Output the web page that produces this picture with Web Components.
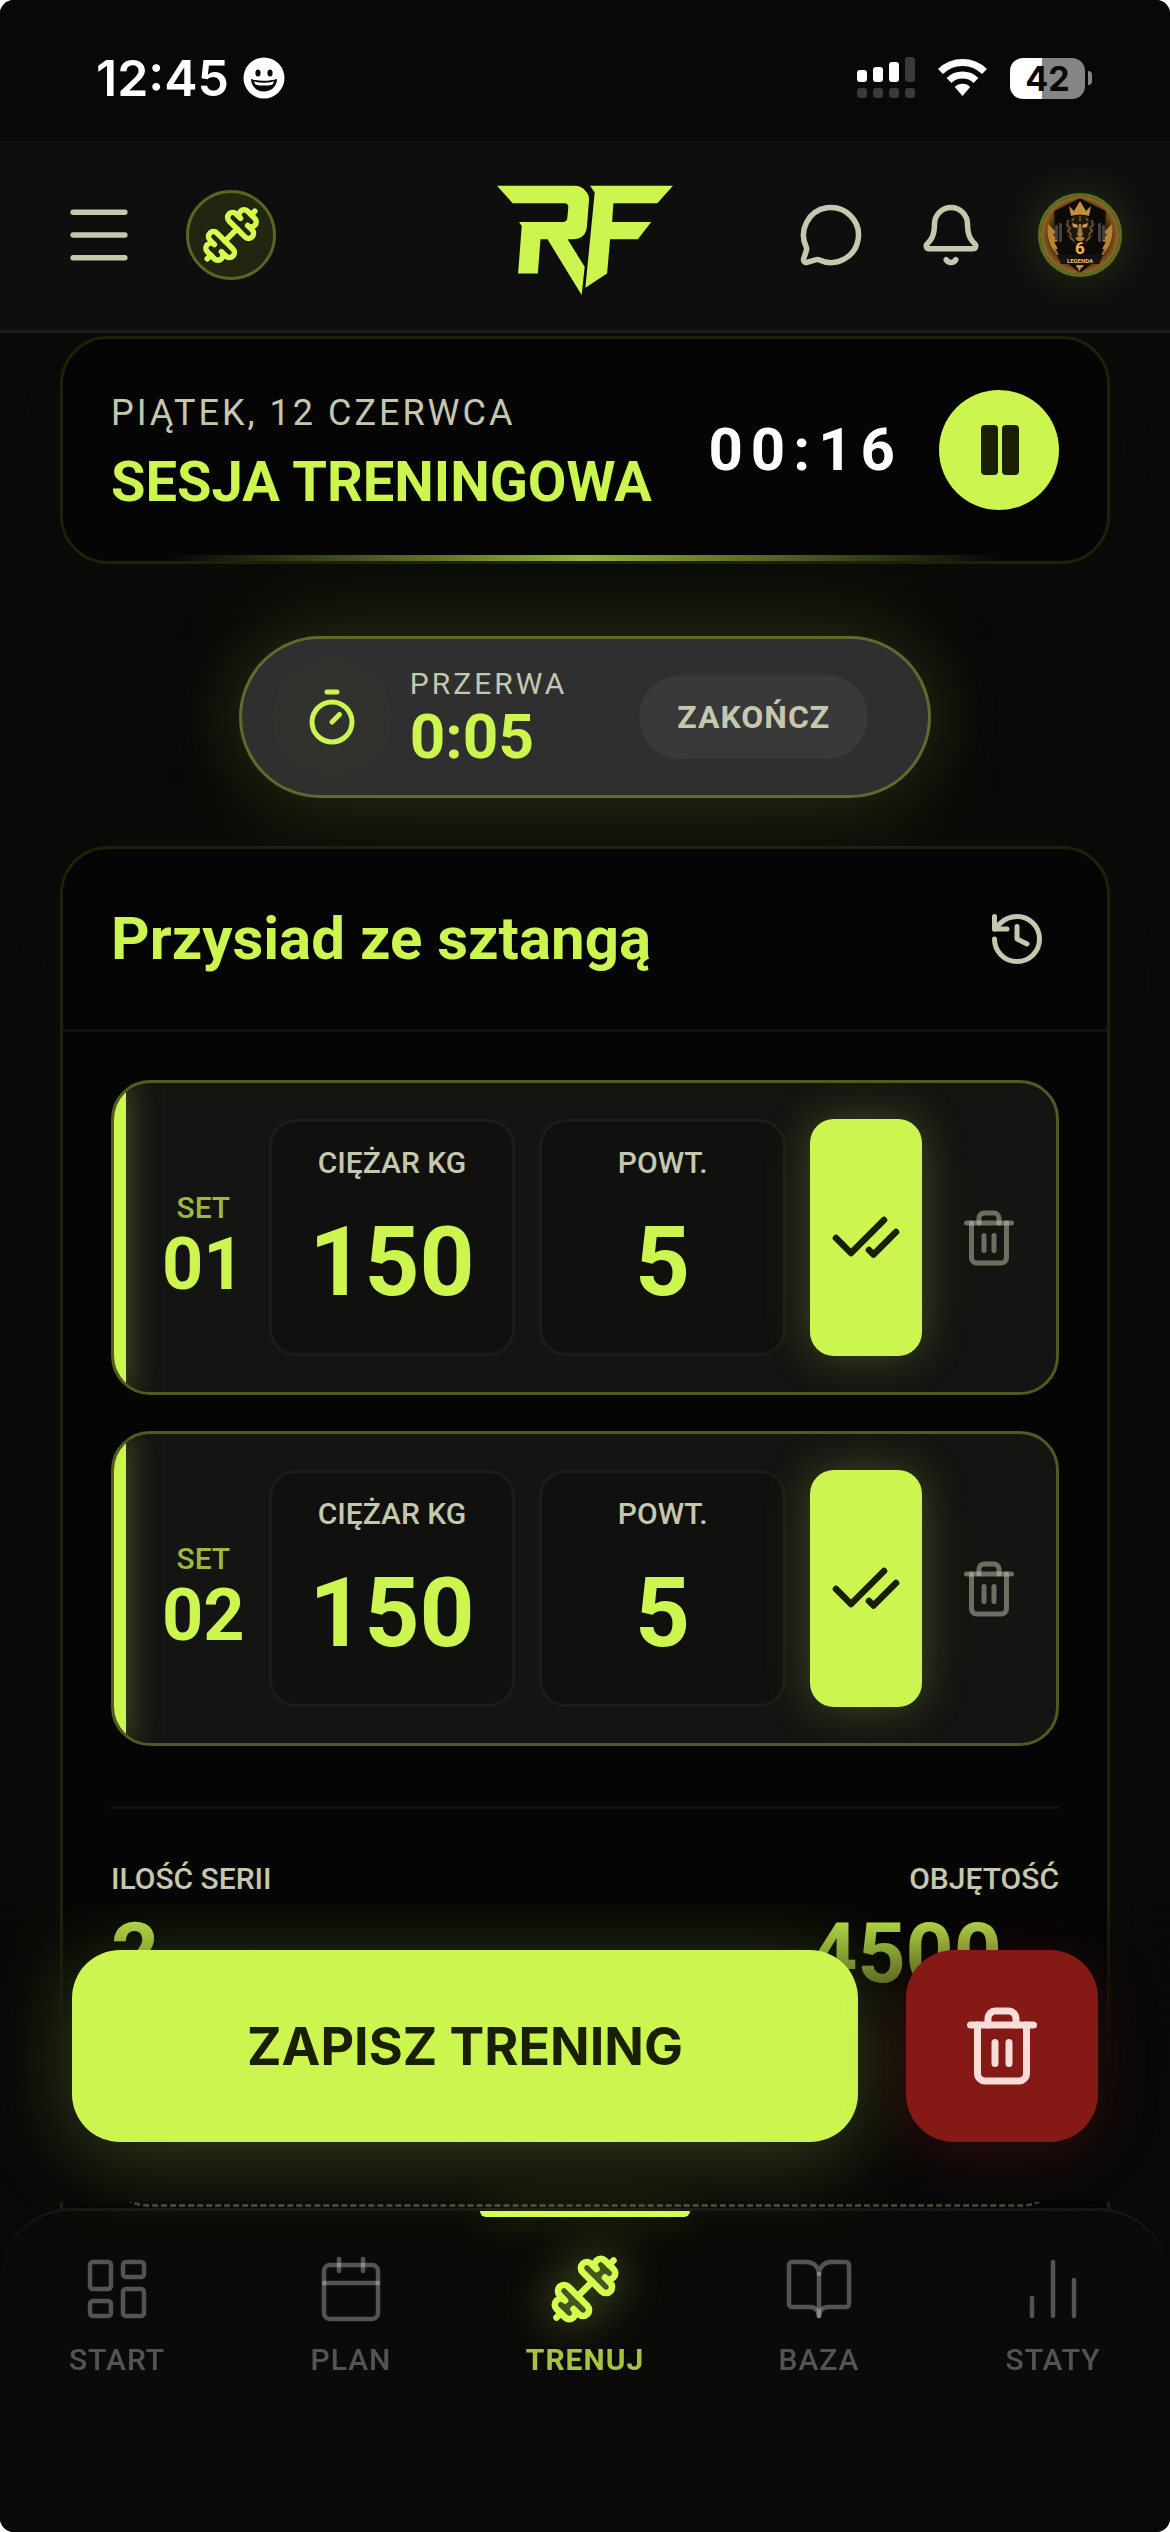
<!DOCTYPE html>
<html lang="pl">
<head>
<meta charset="utf-8">
<meta name="viewport" content="width=device-width, initial-scale=1">
<title>RF - Sesja treningowa</title>
<style>
    :root {
        --lime: #ccf550;
        --ink: #1a1f03;
        --muted: #c5c8ae;
        --card: #050505;
        --card-line: #1d2206;
        --hairline: #121212;
    }
    html {
        background: #fff;
    }
    body {
        margin: 0;
        font-family: Roboto, "Noto Sans", sans-serif;
        color: var(--muted);
    }
</style>
</head>
<body>
<app-shell>
    <status-bar slot="top" time="12:45" battery="42"></status-bar>
    <app-header slot="top"></app-header>
    <session-card date="PIĄTEK, 12 CZERWCA" clock="00:16">SESJA TRENINGOWA</session-card>
    <rest-timer left="0:05">PRZERWA</rest-timer>
    <exercise-card name="Przysiad ze sztangą" sets="2" volume="4500">
        <set-row number="01" weight="150" reps="5"></set-row>
        <set-row number="02" weight="150" reps="5"></set-row>
    </exercise-card>
    <action-bar slot="dock">ZAPISZ TRENING</action-bar>
    <tab-bar slot="dock">
        <tab-item icon="dashboard" href="#start">START</tab-item>
        <tab-item icon="calendar" href="#plan">PLAN</tab-item>
        <tab-item icon="dumbbell" href="#trenuj" active>TRENUJ</tab-item>
        <tab-item icon="book" href="#baza">BAZA</tab-item>
        <tab-item icon="stats" href="#staty">STATY</tab-item>
    </tab-bar>
</app-shell>

<script>
const ICONS = {
    menu: '<path d="M2.6 3.7h18.8M2.6 12h18.8M2.6 20.3h18.8"/>',
    dumbbell: '<path class="body" d="M17.596 12.768a2 2 0 1 0 2.829-2.829l-1.768-1.767a2 2 0 0 0 2.828-2.829l-2.828-2.828a2 2 0 0 0-2.829 2.828l-1.767-1.768a2 2 0 1 0-2.829 2.829z"/><path d="m2.5 21.5 1.4-1.4"/><path d="m20.1 3.9 1.4-1.4"/><path class="body" d="M5.343 21.485a2 2 0 1 0 2.829-2.828l1.767 1.768a2 2 0 1 0 2.829-2.829l-6.364-6.364a2 2 0 1 0-2.829 2.829l1.768 1.767a2 2 0 0 0-2.828 2.829z"/><path d="m9.6 14.4 4.8-4.8"/>',
    chat: '<path d="M2.992 16.342a2 2 0 0 1 .094 1.167l-1.065 3.29a1 1 0 0 0 1.236 1.168l3.413-.998a2 2 0 0 1 1.099.092 10 10 0 1 0-4.777-4.719"/>',
    bell: '<path d="M10.268 21a2 2 0 0 0 3.464 0"/><path d="M3.262 15.326A1 1 0 0 0 4 17h16a1 1 0 0 0 .74-1.673C19.41 13.956 18 12.499 18 8A6 6 0 0 0 6 8c0 4.499-1.411 5.956-2.738 7.326"/>',
    pause: '<rect x="4.8" y="2" width="6.8" height="20" rx="1.6" fill="currentColor" stroke="none"/><rect x="13.2" y="2" width="6.8" height="20" rx="1.6" fill="currentColor" stroke="none"/>',
    timer: '<path d="M10 2h4"/><path d="m12 14 3-3"/><circle cx="12" cy="14" r="8"/>',
    history: '<path d="M3 12a9 9 0 1 0 9-9 9.75 9.75 0 0 0-6.74 2.74L3 8"/><path d="M3 3v5h5"/><path d="M12 7v5l4 2"/>',
    checks: '<path d="M18 6 7 17l-5-5"/><path d="m22 10-7.5 7.5L13 16"/>',
    trash: '<path d="M3 6h18"/><path d="M19 6v14c0 1-1 2-2 2H7c-1 0-2-1-2-2V6"/><path d="M8 6V4c0-1 1-2 2-2h4c1 0 2 1 2 2v2"/><path d="M10 11v6"/><path d="M14 11v6"/>',
    plus: '<path d="M5 12h14"/><path d="M12 5v14"/>',
    dashboard: '<rect width="7" height="9" x="3" y="3" rx="1"/><rect width="7" height="5" x="14" y="3" rx="1"/><rect width="7" height="9" x="14" y="12" rx="1"/><rect width="7" height="5" x="3" y="16" rx="1"/>',
    calendar: '<path d="M8 2v4"/><path d="M16 2v4"/><rect width="18" height="18" x="3" y="4" rx="2"/><path d="M3 10h18"/>',
    book: '<path d="M12 7v14"/><path d="M3 18a1 1 0 0 1-1-1V4a1 1 0 0 1 1-1h5a4 4 0 0 1 4 4 4 4 0 0 1 4-4h5a1 1 0 0 1 1 1v13a1 1 0 0 1-1 1h-6a3 3 0 0 0-3 3 3 3 0 0 0-3-3z"/>',
    stats: '<path d="M5 21v-6"/><path d="M12 21V3"/><path d="M19 21V9"/>'
};

class UiIcon extends HTMLElement {
    constructor() {
        super();
        this.attachShadow({ mode: 'open' });
    }
    connectedCallback() {
        const size = this.getAttribute('size') || 60;
        this.shadowRoot.innerHTML = `
            <style>
                :host { display: block; line-height: 0; }
                svg {
                    fill: none;
                    stroke: currentColor;
                    stroke-linecap: round;
                    stroke-linejoin: round;
                }
                .body { fill: var(--icon-fill, none); }
            </style>
            <svg viewBox="0 0 24 24" width="${size}" height="${size}" stroke-width="${this.getAttribute('stroke') || 2}" aria-hidden="true">${ICONS[this.getAttribute('name')]}</svg>
        `;
    }
}
customElements.define('ui-icon', UiIcon);

class AppShell extends HTMLElement {
    constructor() {
        super();
        this.attachShadow({ mode: 'open' });
    }
    connectedCallback() {
        this.shadowRoot.innerHTML = `
            <style>
                :host {
                    display: block;
                    height: 100vh;
                    overflow: hidden;
                    border-radius: 14px;
                    background: #080808;
                }
                .top {
                    position: relative;
                    z-index: 2;
                }
                main {
                    display: flex;
                    flex-direction: column;
                    padding: 3px 60px 0;
                }
                .dock {
                    position: fixed;
                    inset: auto 0 0 0;
                    z-index: 3;
                    border-radius: 0 0 14px 14px;
                    overflow: hidden;
                }
            </style>
            <div class="top"><slot name="top"></slot></div>
            <main><slot></slot></main>
            <div class="dock"><slot name="dock"></slot></div>
        `;
    }
}
customElements.define('app-shell', AppShell);

class StatusBar extends HTMLElement {
    constructor() {
        super();
        this.attachShadow({ mode: 'open' });
    }
    connectedCallback() {
        this.shadowRoot.innerHTML = `
            <style>
                :host {
                    display: flex;
                    justify-content: space-between;
                    align-items: center;
                    padding: 48px 78px 33px 96px;
                    background: #080808;
                    color: #fff;
                    font-family: Inter, sans-serif;
                }
                .clock, .signals {
                    display: flex;
                    align-items: center;
                }
                .clock {
                    gap: 14px;
                    font-size: 50px;
                    font-weight: 600;
                    line-height: 60px;
                }
                .signals { gap: 22px; }
                .battery {
                    display: flex;
                    align-items: center;
                    gap: 3px;
                }
                .level {
                    width: 75px;
                    border-radius: 13px;
                    background: linear-gradient(90deg, #fff 43%, #858585 43%);
                    color: #080808;
                    font-size: 34px;
                    font-weight: 700;
                    line-height: 41px;
                    text-align: center;
                }
                .tip {
                    width: 4px;
                    height: 14px;
                    border-radius: 0 7px 7px 0;
                    background: #858585;
                }
                svg { display: block; }
            </style>
            <div class="clock">
                <span>${this.getAttribute('time')}</span>
                <svg width="42" height="42" viewBox="0 0 42 42" aria-hidden="true">
                    <circle cx="21" cy="21" r="20.5" fill="#fff"/>
                    <ellipse cx="15" cy="16" rx="2.6" ry="3.6" fill="#080808"/>
                    <ellipse cx="27" cy="16" rx="2.6" ry="3.6" fill="#080808"/>
                    <path d="M8 22c8 2.400 18 2.400 26 0 0 7-5.500 12.500-13 12.500S8 29 8 22z" fill="#080808"/>
                    <path d="M11 24.500c6.500 1.800 13.500 1.800 20 0-.5 1.500-1 2.500-2 3.200-5 1.200-11 1.200-16 0-1-.7-1.700-1.700-2-3.200z" fill="#fff"/>
                </svg>
            </div>
            <div class="signals">
                <svg width="58" height="42" viewBox="0 0 58 42" aria-hidden="true">
                    <g fill="#fff">
                        <rect x="0" y="13" width="10" height="12" rx="3"/>
                        <rect x="16" y="10" width="10" height="15" rx="3"/>
                        <rect x="32" y="5" width="10" height="20" rx="3"/>
                    </g>
                    <g fill="#3a3a3a">
                        <rect x="48" y="0" width="10" height="25" rx="3"/>
                        <rect x="0" y="31" width="10" height="10" rx="3"/>
                        <rect x="16" y="31" width="10" height="10" rx="3"/>
                        <rect x="32" y="31" width="10" height="10" rx="3"/>
                        <rect x="48" y="31" width="10" height="10" rx="3"/>
                    </g>
                </svg>
                <svg width="51" height="38" viewBox="0 0 51 38" aria-hidden="true">
                    <path d="M3.500 12.500a31.500 31.500 0 0 1 44 0" fill="none" stroke="#fff" stroke-width="7"/>
                    <path d="M12 21.500a19.500 19.500 0 0 1 27 0" fill="none" stroke="#fff" stroke-width="7"/>
                    <path d="M17.800 28a11 11 0 0 1 15.400 0L25.500 37z" fill="#fff"/>
                </svg>
                <div class="battery"><div class="level">${this.getAttribute('battery')}</div><div class="tip"></div></div>
            </div>
        `;
    }
}
customElements.define('status-bar', StatusBar);

class AppHeader extends HTMLElement {
    constructor() {
        super();
        this.attachShadow({ mode: 'open' });
    }
    connectedCallback() {
        this.shadowRoot.innerHTML = `
            <style>
                :host {
                    display: grid;
                    grid-template-columns: 1fr auto 1fr;
                    align-items: center;
                    padding: 34px 48px 35px;
                    background: #0e0e0e;
                    border-bottom: 3px solid #1b1b1b;
                }
                .group {
                    display: flex;
                    align-items: center;
                    gap: 24px;
                }
                .left { gap: 36px; }
                .right { justify-content: flex-end; }
                button {
                    display: grid;
                    place-items: center;
                    width: 96px;
                    height: 96px;
                    padding: 0;
                    border: 0;
                    background: none;
                    color: var(--muted);
                }
                .left button:first-child { width: 102px; }
                button.round {
                    width: 90px;
                    height: 90px;
                    border: 3px solid #59661f;
                    border-radius: 50%;
                    background: #222510;
                    color: #d4ff4f;
                }
                button.avatar {
                    width: 84px;
                    height: 84px;
                    margin-left: 15px;
                    border: 3px solid #5a6f20;
                    border-radius: 50%;
                    box-shadow: 0 0 45px rgba(204, 245, 80, 0.16);
                    overflow: hidden;
                }
                svg { display: block; }
            </style>
            <div class="group left">
                <button type="button" aria-label="Menu"><ui-icon name="menu" size="66"></ui-icon></button>
                <button type="button" class="round" aria-label="Trening"><ui-icon name="dumbbell" size="60" stroke="2.2"></ui-icon></button>
            </div>
            <svg width="176" height="120" viewBox="52 20 526 358" fill="#ccf550" role="img" aria-label="RF">
                <path d="M52 52h232q20 0 32 15 12 12 11 28l-6 77q-3 38-42 40h-16l51 82-9 84-102-166h-21l-8 102h-59l11-142-8-12h133q10-2 11-11l3-31q1-12-9-14H99z"/>
                <path d="M330 52h248l-47 52H400l-4 56h117l-40 52h-83l-9 102-65 43 28-285z"/>
            </svg>
            <div class="group right">
                <button type="button" aria-label="Wiadomości"><ui-icon name="chat" size="66"></ui-icon></button>
                <button type="button" aria-label="Powiadomienia"><ui-icon name="bell" size="66"></ui-icon></button>
                <button type="button" class="avatar" aria-label="Profil">
                    <svg width="78" height="78" viewBox="0 0 78 78" aria-hidden="true">
                        <defs>
                            <radialGradient id="gold"><stop offset=".65" stop-color="#24180a"/><stop offset="1" stop-color="#9a6a26"/></radialGradient>
                        </defs>
                        <rect width="78" height="78" fill="url(#gold)"/>
                        <path d="M39 2 65 15v28l-4 17-22 17-22-17-4-17V15z" fill="#0b0a09" stroke="#4a3719" stroke-width="1"/>
                        <path d="M7 28l9 9-4 1 5 7-4 1 4 7-3 0 5 8C10 54 5 42 7 28zM71 28l-9 9 4 1-5 7 4 1-4 7 3 0-5 8c9-7 14-19 12-33z" fill="#b98232"/>
                        <g fill="#45413c"><rect x="14" y="29" width="3" height="15" rx="1"/><rect x="18" y="27" width="3" height="19" rx="1"/><rect x="57" y="27" width="3" height="19" rx="1"/><rect x="61" y="29" width="3" height="15" rx="1"/></g>
                        <path d="M39 19c9 0 14 6 14 14 0 7-4 12-8 15H33c-4-3-8-8-8-15 0-8 5-14 14-14z" fill="#1f160c"/>
                        <path d="M28 10l5 5 6-10 6 10 5-5-2 10q-9-3-18 0z" fill="#c48f3e"/>
                        <path d="M31 27l6 2-1 3-4-1zM47 27l-6 2 1 3 4-1z" fill="#d19a48"/>
                        <path d="M38 28h2l2 11-3 2-3-2zM34 42l5-2 5 2-3 3h-4z" fill="#a67a39"/>
                        <path d="M27 24l-1 5 3 3-2 3 3 3-1 3 4 4M51 24l1 5-3 3 2 3-3 3 1 3-4 4M33 22l-2 3M45 22l2 3M39 20v5" fill="none" stroke="#80592a" stroke-width="1.500"/>
                        <text x="39" y="58" text-anchor="middle" font-family="Roboto, sans-serif" font-weight="700" font-size="17" fill="#efb455" stroke="#0d0b09" stroke-width="2" paint-order="stroke">6</text>
                        <path d="M16 59h46l-4 9H20z" fill="#14120f"/>
                        <text x="39" y="67" text-anchor="middle" font-family="Roboto, sans-serif" font-weight="700" font-size="6" fill="#e9c07a">LEGENDA</text>
                        <path d="M35 69h8l-2 3h-1l-2 4-1-4h-1z" fill="#c78c3a"/>
                    </svg>
                </button>
            </div>
        `;
    }
}
customElements.define('app-header', AppHeader);

class SessionCard extends HTMLElement {
    constructor() {
        super();
        this.attachShadow({ mode: 'open' });
    }
    connectedCallback() {
        this.shadowRoot.innerHTML = `
            <style>
                :host {
                    display: flex;
                    align-items: center;
                    position: relative;
                    padding: 48px;
                    border: 3px solid var(--card-line);
                    border-radius: 48px;
                    background: var(--card);
                    box-shadow: 0 0 120px rgba(204, 245, 80, 0.04);
                }
                /* glowing line along the bottom edge */
                :host::after {
                    content: "";
                    position: absolute;
                    inset: auto 10% 0 10%;
                    height: 6px;
                    background: linear-gradient(90deg, transparent, #93b33a, transparent);
                }
                .text {
                    display: flex;
                    flex-direction: column;
                    gap: 8px;
                    flex: 1;
                }
                .date {
                    font-size: 36px;
                    line-height: 52px;
                    letter-spacing: 3px;
                }
                h1 {
                    margin: 0;
                    padding-top: 4px;
                    color: var(--lime);
                    font-size: 56px;
                    font-weight: 700;
                    line-height: 62px;
                    white-space: nowrap;
                }
                time {
                    color: #fff;
                    font-size: 60px;
                    font-weight: 700;
                    line-height: 72px;
                    letter-spacing: 8px;
                }
                button {
                    display: grid;
                    place-items: center;
                    width: 120px;
                    height: 120px;
                    margin-left: 36px;
                    padding: 0;
                    border: 0;
                    border-radius: 50%;
                    background: var(--lime);
                    color: var(--ink);
                }
            </style>
            <div class="text">
                <div class="date">${this.getAttribute('date')}</div>
                <h1><slot></slot></h1>
            </div>
            <time>${this.getAttribute('clock')}</time>
            <button type="button" aria-label="Pauza"><ui-icon name="pause" size="60"></ui-icon></button>
        `;
    }
}
customElements.define('session-card', SessionCard);

class RestTimer extends HTMLElement {
    constructor() {
        super();
        this.attachShadow({ mode: 'open' });
    }
    connectedCallback() {
        this.shadowRoot.innerHTML = `
            <style>
                :host {
                    display: flex;
                    align-items: center;
                    align-self: center;
                    margin: 72px 0 48px;
                    padding: 18px 60px 18px 30px;
                    border: 3px solid #5f6b2b;
                    border-radius: 81px;
                    background: #2f2f2f;
                    box-shadow: 0 0 90px rgba(204, 245, 80, 0.2);
                }
                .icon {
                    display: grid;
                    place-items: center;
                    width: 120px;
                    height: 120px;
                    border-radius: 50%;
                    background: #31312e;
                    color: var(--lime);
                }
                .text {
                    display: flex;
                    flex-direction: column;
                    margin: 0 72px 0 18px;
                }
                .label {
                    font-size: 30px;
                    line-height: 40px;
                    letter-spacing: 3px;
                }
                time {
                    color: var(--lime);
                    font-size: 62px;
                    font-weight: 700;
                    line-height: 66px;
                }
                button {
                    height: 84px;
                    padding: 0 38px;
                    border: 0;
                    border-radius: 42px;
                    background: #393939;
                    color: var(--muted);
                    font: 700 32px Roboto, sans-serif;
                    letter-spacing: 1px;
                }
            </style>
            <div class="icon"><ui-icon name="timer" size="60"></ui-icon></div>
            <div class="text">
                <span class="label"><slot></slot></span>
                <time>${this.getAttribute('left')}</time>
            </div>
            <button type="button">ZAKOŃCZ</button>
        `;
    }
}
customElements.define('rest-timer', RestTimer);

class SetRow extends HTMLElement {
    constructor() {
        super();
        this.attachShadow({ mode: 'open' });
    }
    connectedCallback() {
        this.shadowRoot.innerHTML = `
            <style>
                :host {
                    display: flex;
                    align-items: stretch;
                    gap: 24px;
                    position: relative;
                    padding: 36px 24px 36px 48px;
                    border: 3px solid #515b1f;
                    border-radius: 39px;
                    background: #141412;
                    overflow: hidden;
                }
                /* done marker */
                :host::before {
                    content: "";
                    position: absolute;
                    inset: 0 auto 0 0;
                    width: 12px;
                    background: var(--lime);
                    box-shadow: 0 0 30px rgba(204, 245, 80, 0.5);
                }
                .number {
                    display: flex;
                    flex-direction: column;
                    justify-content: center;
                    align-items: center;
                    padding-top: 12px;
                    color: var(--lime);
                    font-size: 72px;
                    font-weight: 700;
                    line-height: 72px;
                }
                .number small {
                    color: #9bb83f;
                    font-size: 30px;
                    font-weight: 500;
                    line-height: 42px;
                }
                .field {
                    display: flex;
                    flex-direction: column;
                    align-items: center;
                    gap: 15px;
                    flex: 1;
                    min-width: 0;
                    padding: 21px 0 26px;
                    border: 3px solid #1c1c1b;
                    border-radius: 27px;
                    background: #10100e;
                    font-size: 30px;
                    font-weight: 500;
                    line-height: 39px;
                }
                input {
                    box-sizing: border-box;
                    width: 100%;
                    height: 130px;
                    padding: 0;
                    border: 0;
                    outline: 0;
                    background: none;
                    color: var(--lime);
                    font: 700 96px/130px Roboto, sans-serif;
                    text-align: center;
                }
                button {
                    display: grid;
                    place-items: center;
                    flex: none;
                    padding: 0;
                    border: 0;
                    background: none;
                }
                .check {
                    width: 112px;
                    border-radius: 24px;
                    background: var(--lime);
                    color: var(--ink);
                    box-shadow: 0 0 45px rgba(204, 245, 80, 0.25);
                }
                .trash {
                    width: 86px;
                    color: rgba(197, 200, 174, 0.5);
                }
            </style>
            <div class="number"><small>SET</small>${this.getAttribute('number')}</div>
            <label class="field">CIĘŻAR KG<input type="text" inputmode="decimal" value="${this.getAttribute('weight')}"></label>
            <label class="field">POWT.<input type="text" inputmode="numeric" value="${this.getAttribute('reps')}"></label>
            <button type="button" class="check" aria-label="Zaliczona"><ui-icon name="checks" size="72" stroke="2.2"></ui-icon></button>
            <button type="button" class="trash" aria-label="Usuń serię"><ui-icon name="trash" size="60"></ui-icon></button>
        `;
    }
}
customElements.define('set-row', SetRow);

class ExerciseCard extends HTMLElement {
    constructor() {
        super();
        this.attachShadow({ mode: 'open' });
    }
    connectedCallback() {
        this.shadowRoot.innerHTML = `
            <style>
                :host {
                    display: block;
                    border: 3px solid var(--card-line);
                    border-radius: 48px;
                    background: var(--card);
                    box-shadow: 0 0 120px rgba(204, 245, 80, 0.04);
                }
                header {
                    display: flex;
                    justify-content: space-between;
                    align-items: center;
                    padding: 48px;
                    border-bottom: 3px solid var(--hairline);
                }
                h2 {
                    margin: 0;
                    color: var(--lime);
                    font-size: 60px;
                    font-weight: 700;
                    line-height: 84px;
                }
                header button {
                    display: grid;
                    place-items: center;
                    width: 84px;
                    height: 84px;
                    padding: 0;
                    border: 0;
                    background: none;
                    color: var(--muted);
                }
                .rows {
                    display: flex;
                    flex-direction: column;
                    gap: 36px;
                    padding: 48px 48px 60px;
                }
                .totals {
                    display: flex;
                    justify-content: space-between;
                    margin: 0 48px;
                    padding-top: 48px;
                    border-top: 3px solid var(--hairline);
                }
                dl { margin: 0; }
                dt {
                    font-size: 30px;
                    font-weight: 500;
                    line-height: 44px;
                }
                dd {
                    margin: 0;
                    color: var(--lime);
                    font-size: 84px;
                    font-weight: 700;
                    line-height: 105px;
                }
                .volume { text-align: right; }
                .volume dd { padding-right: 57px; }
                .add {
                    display: flex;
                    justify-content: center;
                    align-items: center;
                    gap: 24px;
                    width: calc(100% - 96px);
                    height: 150px;
                    margin: 51px 48px 48px;
                    border: 3px dashed #3f422f;
                    border-radius: 36px;
                    background: none;
                    color: var(--muted);
                    font: 700 32px Roboto, sans-serif;
                    letter-spacing: 3px;
                }
            </style>
            <header>
                <h2>${this.getAttribute('name')}</h2>
                <button type="button" aria-label="Historia"><ui-icon name="history" size="60"></ui-icon></button>
            </header>
            <div class="rows"><slot></slot></div>
            <div class="totals">
                <dl><dt>ILOŚĆ SERII</dt><dd>${this.getAttribute('sets')}</dd></dl>
                <dl class="volume"><dt>OBJĘTOŚĆ</dt><dd>${this.getAttribute('volume')}</dd></dl>
            </div>
            <button type="button" class="add"><ui-icon name="plus" size="48"></ui-icon>DODAJ SERIĘ</button>
        `;
    }
}
customElements.define('exercise-card', ExerciseCard);

class ActionBar extends HTMLElement {
    constructor() {
        super();
        this.attachShadow({ mode: 'open' });
    }
    connectedCallback() {
        this.shadowRoot.innerHTML = `
            <style>
                :host {
                    display: flex;
                    gap: 48px;
                    margin-bottom: 6px;
                    padding: 48px 72px 60px;
                    background: linear-gradient(0deg, #080808, rgba(8, 8, 8, 0.97) 55%, transparent);
                }
                button {
                    display: grid;
                    place-items: center;
                    height: 192px;
                    padding: 0;
                    border: 0;
                    border-radius: 48px;
                }
                .save {
                    flex: 1;
                    background: var(--lime);
                    color: var(--ink);
                    font: 700 52px Inter, sans-serif;
                    box-shadow: 0 12px 90px rgba(204, 245, 80, 0.25);
                }
                .drop {
                    width: 192px;
                    background: #851916;
                    color: #f9dcd8;
                    box-shadow: 0 12px 60px rgba(133, 25, 22, 0.3);
                }
            </style>
            <button type="button" class="save"><slot></slot></button>
            <button type="button" class="drop" aria-label="Odrzuć trening"><ui-icon name="trash" size="84"></ui-icon></button>
        `;
    }
}
customElements.define('action-bar', ActionBar);

class TabBar extends HTMLElement {
    constructor() {
        super();
        this.attachShadow({ mode: 'open' });
    }
    connectedCallback() {
        this.shadowRoot.innerHTML = `
            <style>
                :host {
                    display: block;
                    border-top: 3px solid #161616;
                    border-radius: 72px 72px 0 0;
                    background: #0a0a08;
                }
                nav {
                    display: grid;
                    grid-template-columns: repeat(5, 1fr);
                    padding-bottom: 153px;
                }
            </style>
            <nav><slot></slot></nav>
        `;
    }
}
customElements.define('tab-bar', TabBar);

class TabItem extends HTMLElement {
    constructor() {
        super();
        this.attachShadow({ mode: 'open' });
    }
    connectedCallback() {
        const active = this.hasAttribute('active');
        this.shadowRoot.innerHTML = `
            <style>
                :host {
                    display: block;
                    position: relative;
                }
                a {
                    display: flex;
                    flex-direction: column;
                    align-items: center;
                    gap: 15px;
                    padding-top: 42px;
                    color: rgba(255, 255, 255, 0.3);
                    font-size: 30px;
                    font-weight: 500;
                    line-height: 39px;
                    letter-spacing: 1px;
                    text-decoration: none;
                }
                :host([active]) a {
                    color: #a5c540;
                    font-weight: 700;
                }
                :host([active]) ui-icon {
                    --icon-fill: rgba(212, 255, 79, 0.2);
                    color: #d4ff4f;
                    filter: drop-shadow(0 0 24px rgba(204, 245, 80, 0.5));
                }
                :host([active])::before {
                    content: "";
                    position: absolute;
                    inset: 0 12px auto 12px;
                    height: 6px;
                    border-radius: 0 0 6px 6px;
                    background: #d4ff4f;
                    box-shadow: 0 0 45px rgba(204, 245, 80, 0.4);
                }
            </style>
            <a href="${this.getAttribute('href')}" ${active ? 'aria-current="page"' : ''}>
                <ui-icon name="${this.getAttribute('icon')}" size="72" stroke="${active ? 2.2 : 1.5}"></ui-icon>
                <span><slot></slot></span>
            </a>
        `;
    }
}
customElements.define('tab-item', TabItem);
</script>
</body>
</html>
